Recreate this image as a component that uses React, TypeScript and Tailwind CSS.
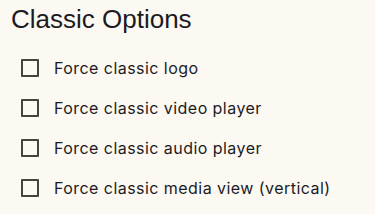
export default function App() {
  const items = [
    "Force classic logo",
    "Force classic video player",
    "Force classic audio player",
    "Force classic media view (vertical)",
  ];
  return (
    <div className="h-[214px] w-[375px] bg-[#fcf9f3] pl-[11px] pt-[2px]">
      <h2 className="font-['Liberation_Sans',Arial,sans-serif] text-[26px] leading-[34px] text-[#1b1b1f]">
        Classic Options
      </h2>
      <ul className="mt-[23px] flex flex-col gap-[22px] pl-[10px]">
        {items.map((t) => (
          <li key={t} className="flex h-[18px] items-center gap-[15px]">
            <span className="h-[18px] w-[18px] shrink-0 rounded-[1px] border-2 border-[#45453d]" />
            <span className="font-['Inter',sans-serif] text-[16px] leading-[18px] tracking-[0.45px] text-[#1b1b1f]">
              {t}
            </span>
          </li>
        ))}
      </ul>
    </div>
  );
}
